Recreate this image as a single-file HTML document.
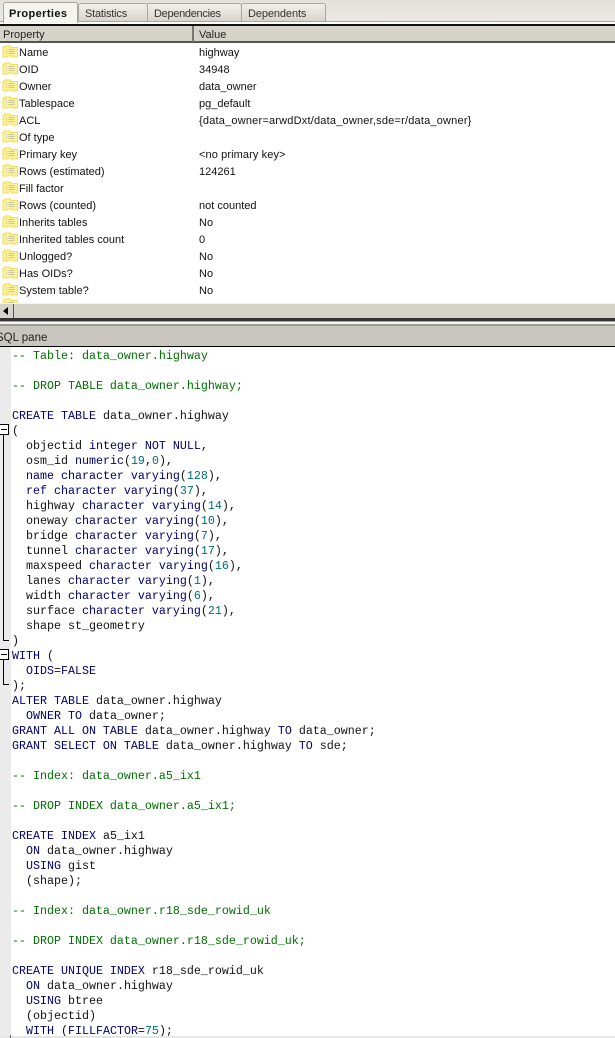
<!DOCTYPE html>
<html><head><meta charset="utf-8"><style>
html,body{margin:0;padding:0;background:#fff}
#p{position:relative;width:615px;height:1038px;overflow:hidden;background:#fff;font:11px "Liberation Sans",sans-serif;color:#111}
.a{position:absolute}
.tab{position:absolute;top:3px;height:18px;background:linear-gradient(#f1efe9,#d8d5cc);border:1px solid #a9a79d;border-bottom:0;border-radius:3px 3px 0 0;color:#333;line-height:21px;box-sizing:border-box;padding-left:5px;white-space:nowrap}
.r{position:absolute;left:19px;white-space:nowrap;line-height:17px;height:17px;margin-top:2px}
.v{position:absolute;left:199px;white-space:nowrap;line-height:17px;height:17px;margin-top:2px}
.ic{position:absolute;left:2px;width:17px;height:13px}
#c{position:absolute;left:12px;top:349px;margin:0;font:11.67px/15px "Liberation Mono",monospace;color:#111;white-space:pre}
#c i{font-style:normal;color:#00006f}
#c b{font-weight:normal;color:#006f6f}
#c u{text-decoration:none;color:#006f00}
</style></head><body><div id="p">
<svg width="0" height="0" style="position:absolute"><defs><g id="f"><path d="M1 12V2.500h1.500V1h6v1.500H15.500V12H10v-1H6v1z" fill="#fdf29a" stroke="#f0de60"/><path d="M4 4.500h1M6.500 4.500h6M4 6.500h1M6.500 6.500h6M4 8.500h1M6.500 8.500h6" stroke="#c8c8a0" fill="none"/></g></defs></svg>

<div class="a" style="left:0;top:0;width:615px;height:22px;background:linear-gradient(#e4e0dc,#eceae6)"></div>
<div class="tab" style="left:146px;width:96px;padding-left:7px;letter-spacing:-.3px">Dependencies</div>
<div class="tab" style="left:241px;width:85px;padding-left:6px;letter-spacing:-.1px">Dependents</div>
<div class="tab" style="left:78px;width:70px;padding-left:6px;letter-spacing:-.2px">Statistics</div>
<div class="a" style="left:0;top:21px;width:615px;height:1px;background:#a9a79d"></div>
<div class="a" style="left:3px;top:2px;width:75px;height:21px;background:#f5f4ef;border:1px solid #a9a79d;border-bottom:0;border-radius:3px 3px 0 0;box-sizing:border-box;font-weight:bold;color:#111;line-height:22px;padding-left:5px;letter-spacing:.4px">Properties</div>

<div class="a" style="left:0;top:24px;width:615px;height:2px;background:#111"></div>
<div class="a" style="left:0;top:26px;width:615px;height:15px;background:#d6d3cb"></div>
<div class="a" style="left:0;top:41px;width:615px;height:2px;background:#555"></div>
<div class="a" style="left:192px;top:26px;width:2px;height:16px;background:#777"></div>
<div class="a" style="left:3px;top:28px;line-height:15px;color:#222">Property</div>
<div class="a" style="left:199px;top:28px;line-height:15px;color:#222">Value</div>

<svg class="ic" style="top:45px"><use href="#f"/></svg><div class="r" style="top:43px">Name</div><div class="v" style="top:43px">highway</div>
<svg class="ic" style="top:62px"><use href="#f"/></svg><div class="r" style="top:60px">OID</div><div class="v" style="top:60px">34948</div>
<svg class="ic" style="top:79px"><use href="#f"/></svg><div class="r" style="top:77px">Owner</div><div class="v" style="top:77px">data_owner</div>
<svg class="ic" style="top:96px"><use href="#f"/></svg><div class="r" style="top:94px">Tablespace</div><div class="v" style="top:94px">pg_default</div>
<svg class="ic" style="top:113px"><use href="#f"/></svg><div class="r" style="top:111px">ACL</div><div class="v" style="top:111px;letter-spacing:.2px">{data_owner=arwdDxt/data_owner,sde=r/data_owner}</div>
<svg class="ic" style="top:130px"><use href="#f"/></svg><div class="r" style="top:128px">Of type</div>
<svg class="ic" style="top:147px"><use href="#f"/></svg><div class="r" style="top:145px">Primary key</div><div class="v" style="top:145px;letter-spacing:.1px">&lt;no primary key&gt;</div>
<svg class="ic" style="top:164px"><use href="#f"/></svg><div class="r" style="top:162px">Rows (estimated)</div><div class="v" style="top:162px">124261</div>
<svg class="ic" style="top:181px"><use href="#f"/></svg><div class="r" style="top:179px">Fill factor</div>
<svg class="ic" style="top:198px"><use href="#f"/></svg><div class="r" style="top:196px">Rows (counted)</div><div class="v" style="top:196px">not counted</div>
<svg class="ic" style="top:215px"><use href="#f"/></svg><div class="r" style="top:213px">Inherits tables</div><div class="v" style="top:213px">No</div>
<svg class="ic" style="top:232px"><use href="#f"/></svg><div class="r" style="top:230px">Inherited tables count</div><div class="v" style="top:230px">0</div>
<svg class="ic" style="top:249px"><use href="#f"/></svg><div class="r" style="top:247px">Unlogged?</div><div class="v" style="top:247px">No</div>
<svg class="ic" style="top:266px"><use href="#f"/></svg><div class="r" style="top:264px">Has OIDs?</div><div class="v" style="top:264px">No</div>
<svg class="ic" style="top:283px"><use href="#f"/></svg><div class="r" style="top:281px">System table?</div><div class="v" style="top:281px">No</div>
<svg class="ic" style="top:298px;height:5px"><use href="#f"/></svg>

<div class="a" style="left:0;top:303px;width:615px;height:15px;background:#d6d3cb;border-top:1px solid #f4f3ef;box-sizing:border-box"></div>
<div class="a" style="left:13px;top:304px;width:1px;height:14px;background:#555"></div>
<div class="a" style="left:3px;top:307px;width:0;height:0;border:4px solid transparent;border-left:0;border-right:5px solid #000"></div>
<div class="a" style="left:0;top:318px;width:615px;height:3px;background:#333"></div>
<div class="a" style="left:0;top:321px;width:615px;height:1px;background:#aaa"></div>
<div class="a" style="left:0;top:322px;width:615px;height:2px;background:#f5f4ee"></div>
<div class="a" style="left:0;top:324px;width:615px;height:2px;background:#9c9a92"></div>
<div class="a" style="left:0;top:326px;width:615px;height:20px;background:#c9c6bf"></div>
<div class="a" style="left:-4px;top:330px;line-height:17px;color:#222;font-size:11.500px">SQL pane</div>
<div class="a" style="left:0;top:346px;width:615px;height:1px;background:#000"></div>

<div class="a" style="left:0;top:347px;width:11px;height:691px;background:#ebebeb"></div>
<div class="a" style="left:-1px;top:424px;width:10px;height:11px;border:1px solid #000;background:#fff;box-sizing:border-box"></div>
<div class="a" style="left:1px;top:429px;width:6px;height:1px;background:#000"></div>
<div class="a" style="left:3px;top:435px;width:1px;height:206px;background:#000"></div>
<div class="a" style="left:3px;top:640px;width:6px;height:1px;background:#000"></div>
<div class="a" style="left:-1px;top:649px;width:10px;height:11px;border:1px solid #000;background:#fff;box-sizing:border-box"></div>
<div class="a" style="left:1px;top:654px;width:6px;height:1px;background:#000"></div>
<div class="a" style="left:3px;top:660px;width:1px;height:25px;background:#000"></div>
<div class="a" style="left:3px;top:684px;width:6px;height:1px;background:#000"></div>

<pre id="c"><u>-- Table: data_owner.highway</u>

<u>-- DROP TABLE data_owner.highway;</u>

<i>CREATE TABLE</i> data_owner.highway
(
  objectid <i>integer NOT NULL</i>,
  osm_id <i>numeric</i>(<b>19</b>,<b>0</b>),
  <i>name character varying</i>(<b>128</b>),
  <i>ref character varying</i>(<b>37</b>),
  highway <i>character varying</i>(<b>14</b>),
  oneway <i>character varying</i>(<b>10</b>),
  bridge <i>character varying</i>(<b>7</b>),
  tunnel <i>character varying</i>(<b>17</b>),
  maxspeed <i>character varying</i>(<b>16</b>),
  lanes <i>character varying</i>(<b>1</b>),
  width <i>character varying</i>(<b>6</b>),
  surface <i>character varying</i>(<b>21</b>),
  shape st_geometry
)
<i>WITH</i> (
  <i>OIDS</i>=<i>FALSE</i>
);
<i>ALTER TABLE</i> data_owner.highway
  <i>OWNER TO</i> data_owner;
<i>GRANT ALL ON TABLE</i> data_owner.highway <i>TO</i> data_owner;
<i>GRANT SELECT ON TABLE</i> data_owner.highway <i>TO</i> sde;

<u>-- Index: data_owner.a5_ix1</u>

<u>-- DROP INDEX data_owner.a5_ix1;</u>

<i>CREATE INDEX</i> a5_ix1
  <i>ON</i> data_owner.highway
  <i>USING</i> gist
  (shape);

<u>-- Index: data_owner.r18_sde_rowid_uk</u>

<u>-- DROP INDEX data_owner.r18_sde_rowid_uk;</u>

<i>CREATE UNIQUE INDEX</i> r18_sde_rowid_uk
  <i>ON</i> data_owner.highway
  <i>USING</i> btree
  (objectid)
  <i>WITH</i> (<i>FILLFACTOR</i>=<b>75</b>);</pre>
<div class="a" style="left:0;top:1036px;width:615px;height:2px;background:#e6e6e6"></div>
<div class="a" style="left:10px;top:1035px;width:1px;height:3px;background:#666"></div>
</div></body></html>
